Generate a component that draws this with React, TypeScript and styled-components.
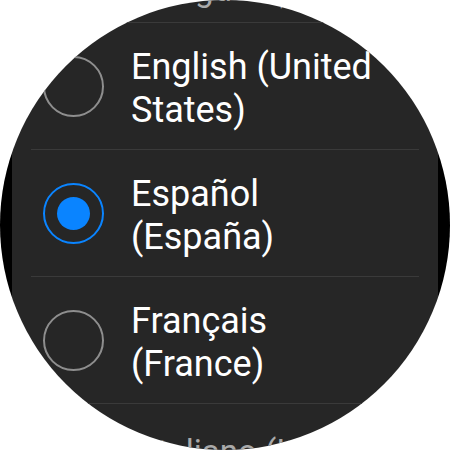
import { createGlobalStyle, styled } from "styled-components";

const GlobalStyle = createGlobalStyle`
  html, body {
    margin: 0;
    padding: 0;
    overflow: hidden;
    background: #ffffff;
  }
`;

type Lang = { id: string; label: string; edge?: boolean };

const languages: Lang[] = [
  { id: "en-gb", label: "English (United Kingdom)", edge: true },
  { id: "en-us", label: "English (United States)" },
  { id: "es-es", label: "Español (España)" },
  { id: "fr-fr", label: "Français (France)" },
  { id: "it-it", label: "Italiano (Italia)", edge: true },
];

const App = () => {
  const selected = "es-es";

  return (
    <>
      <GlobalStyle />
      <Screen>
        <List>
          {languages.map((lang, idx) => (
            <Row key={lang.id} $first={idx === 0}>
              <Radio $checked={lang.id === selected}>
                {lang.id === selected && <Dot />}
              </Radio>
              <Label $edge={lang.edge} $first={idx === 0}>
                {lang.label}
              </Label>
            </Row>
          ))}
        </List>
      </Screen>
    </>
  );
};

export default App;

// round watch face: black bezel band at the sides, dark list panel inside
const Screen = styled.div`
  width: 450px;
  height: 450px;
  overflow: hidden;
  border-radius: 50%;
  background: linear-gradient(
    to right,
    #000000 0 12px,
    #262626 12px 438px,
    #000000 438px 450px
  );
  font-family: Roboto, "Noto Sans", sans-serif;
`;

const List = styled.div`
  display: flex;
  flex-direction: column;
  padding: 0 31px;
`;

const Row = styled.div<{ $first?: boolean }>`
  display: flex;
  align-items: ${(p) => (p.$first ? "flex-end" : "center")};
  gap: 27px;
  padding-left: 12px;
  height: ${(p) => (p.$first ? "22px" : "126px")};
  flex-shrink: 0;

  & + & {
    border-top: 1px solid #3a3a3a;
  }
`;

const Radio = styled.div<{ $checked?: boolean }>`
  display: flex;
  align-items: center;
  justify-content: center;
  flex-shrink: 0;
  box-sizing: border-box;
  width: 61px;
  height: 61px;
  border-radius: 50%;
  border: 2px solid ${(p) => (p.$checked ? "#0a84ff" : "#8e8e8e")};
`;

const Dot = styled.div`
  width: 33px;
  height: 33px;
  border-radius: 50%;
  background: #0a84ff;
`;

const Label = styled.div<{ $edge?: boolean; $first?: boolean }>`
  font-size: ${(p) => (p.$edge ? "33px" : "36px")};
  line-height: ${(p) => (p.$edge ? "40px" : "43px")};
  color: ${(p) => (p.$edge ? "#a9a9a9" : "#ffffff")};
  padding-top: ${(p) => (p.$edge ? "0" : "5px")};
  margin-left: ${(p) => (p.$edge ? "17px" : "0")};
  margin-bottom: ${(p) => (p.$first ? "12px" : "0")};
  align-self: ${(p) => (p.$edge && !p.$first ? "flex-start" : "auto")};
  margin-top: ${(p) => (p.$edge && !p.$first ? "28px" : "0")};
  max-width: ${(p) => (p.$edge ? "235px" : "252px")};
  white-space: ${(p) => (p.$edge && !p.$first ? "nowrap" : "normal")};
`;
